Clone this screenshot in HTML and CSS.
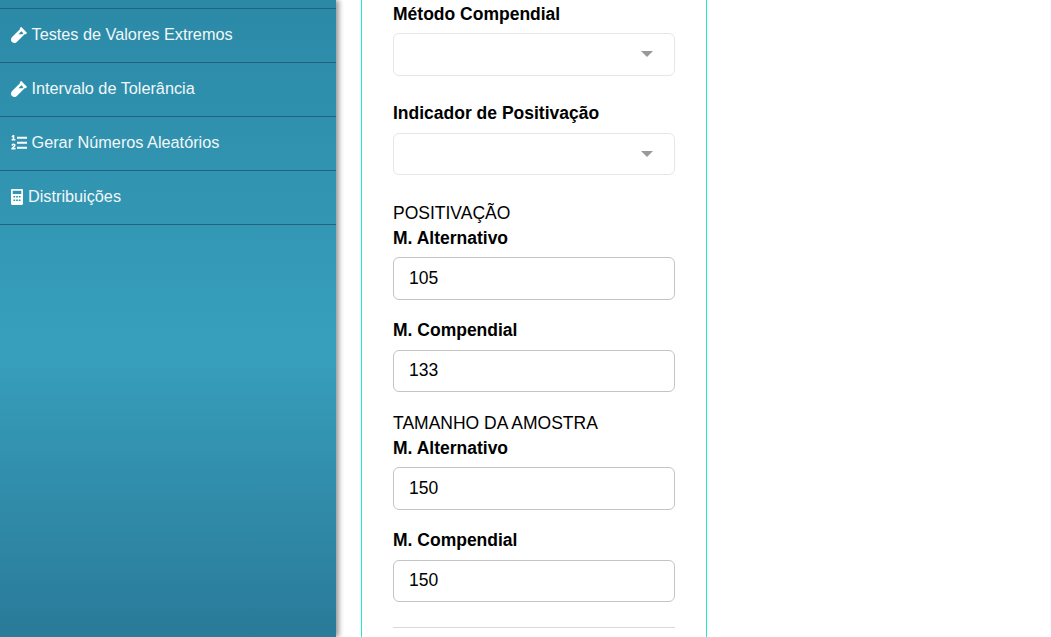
FILE: index.html
```html
<!DOCTYPE html>
<html lang="en">
<head>
    <meta charset="UTF-8">
    <title>Testes</title>
    <link rel="stylesheet" href="styles.css">
</head>
<body>
    <div class="sidebar">
        <ul class="menu">
            <li>
                <svg class="icon" viewBox="0 16 480 480"><path fill-rule="evenodd" d="M477.7 186.1L309.5 18.3c-3.1-3.1-8.2-3.1-11.3 0l-34 33.9c-3.1 3.1-3.1 8.2 0 11.3l11.2 11.1L33 316.5c-38.8 38.7-45.1 103-9.4 144.6 20.6 24 49.4 36 78.1 36 26.4 0 52.8-10 72.9-30.1l242.9-242.3 11.2 11.2c3.1 3.1 8.2 3.1 11.3 0l34-34c3.2-3.1 3.2-8.2 0-11.3zM300 232H225L309 140l62 62-30 30z"/></svg>
                <span>Testes de Valores Extremos</span>
            </li>
            <li>
                <svg class="icon" viewBox="0 16 480 480"><path fill-rule="evenodd" d="M477.7 186.1L309.5 18.3c-3.1-3.1-8.2-3.1-11.3 0l-34 33.9c-3.1 3.1-3.1 8.2 0 11.3l11.2 11.1L33 316.5c-38.8 38.7-45.1 103-9.4 144.6 20.6 24 49.4 36 78.1 36 26.4 0 52.8-10 72.9-30.1l242.9-242.3 11.2 11.2c3.1 3.1 8.2 3.1 11.3 0l34-34c3.2-3.1 3.2-8.2 0-11.3zM300 232H225L309 140l62 62-30 30z"/></svg>
                <span>Intervalo de Tolerância</span>
            </li>
            <li>
                <svg class="icon" viewBox="0 0 16 16"><path d="M0.5 1.2 2 0H3.3V4H4.4V5.6H0.6V4H1.7V2L1.1 2.4ZM0.3 10.2C0.7 9 1.6 8.5 2.6 8.5 3.7 8.5 4.6 9.2 4.6 10.3 4.6 11.3 3.7 12 2.7 12.8H4.6V14.6H0.4V13.1C1.6 12.1 2.9 11.1 2.9 10.6 2.9 10.3 2.7 10.1 2.4 10.1 2.1 10.1 1.9 10.4 1.7 10.9ZM6 1.7H16V3.7H6ZM6 6.7H16V8.7H6ZM6 11.7H16V13.7H6Z"/></svg>
                <span>Gerar Números Aleatórios</span>
            </li>
            <li>
                <svg class="icon calc" viewBox="0 0 12 16"><path fill-rule="evenodd" d="M1.2 0H10.8C11.5 0 12 .5 12 1.2V14.8C12 15.5 11.5 16 10.8 16H1.2C.5 16 0 15.5 0 14.8V1.2C0 .5 .5 0 1.2 0ZM1.7 1.7V5H10.3V1.7ZM2.4 7V8.6H4.2V7ZM5.1 7V8.6H6.9V7ZM7.8 7V8.6H9.6V7ZM2.4 10.4V12H4.2V10.4ZM5.1 10.4V12H6.9V10.4ZM7.8 10.4V12H9.6V10.4Z"/></svg>
                <span>Distribuições</span>
            </li>
        </ul>
    </div>

    <div class="main">
        <div class="card">
            <label class="field-label first">Método Compendial</label>
            <div class="select"><span class="arrow"></span></div>

            <label class="field-label gap-select">Indicador de Positivação</label>
            <div class="select short"><span class="arrow"></span></div>

            <div class="section">POSITIVAÇÃO</div>
            <label class="field-label">M. Alternativo</label>
            <input class="text-input" type="text" value="105">

            <label class="field-label gap-input">M. Compendial</label>
            <input class="text-input short" type="text" value="133">

            <div class="section next">TAMANHO DA AMOSTRA</div>
            <label class="field-label">M. Alternativo</label>
            <input class="text-input" type="text" value="150">

            <label class="field-label gap-input">M. Compendial</label>
            <input class="text-input short" type="text" value="150">

            <hr class="divider">
        </div>
    </div>
</body>
</html>
```

FILE: styles.css
```css
html, body {
    height: 100%;
}

body {
    margin: 0;
    display: flex;
    height: 637px;
    overflow: hidden;
    background: #fff;
    font-family: "Liberation Sans", Arial, sans-serif;
    color: #000;
}

.sidebar {
    width: 336px;
    flex-shrink: 0;
    padding-top: 8px;
    box-sizing: border-box;
    background: linear-gradient(to bottom, #2b89a6 0%, #379fbc 55%, #2a7a99 100%);
    box-shadow: 3px 0 5px rgba(0, 0, 0, 0.4);
}

.menu {
    list-style: none;
    margin: 0;
    padding: 0;
    border-top: 1px solid #22617f;
}

.menu li {
    box-sizing: border-box;
    height: 54px;
    display: flex;
    align-items: center;
    gap: 4.5px;
    padding-left: 11px;
    padding-bottom: 2px;
    border-bottom: 1px solid #22617f;
    color: #f2f7f9;
    font-size: 16.25px;
}

.icon {
    width: 16px;
    height: 16px;
    fill: #fff;
}

.icon.calc {
    width: 12px;
    height: 16px;
    margin-right: 0.5px;
}

.main {
    flex: 1;
    padding-left: 25px;
}

.card {
    width: 346px;
    height: 637px;
    box-sizing: border-box;
    padding: 0 31px;
    background: #fff;
    border-left: 1px solid #1fe8d0;
    border-right: 1px solid #1fe8d0;
}

.field-label {
    display: block;
    font-size: 17.5px;
    font-weight: bold;
    line-height: 20px;
    margin-bottom: 9px;
}

.field-label.first {
    padding-top: 4px;
}

.gap-select {
    margin-top: 27px;
    margin-bottom: 10px;
}

.gap-input {
    margin-top: 20px;
    margin-bottom: 10px;
}

.select {
    position: relative;
    height: 43px;
    box-sizing: border-box;
    border: 1px solid #e6e6e6;
    border-radius: 6px;
}

.select.short {
    height: 42px;
}

.arrow {
    position: absolute;
    right: 21px;
    top: 17px;
    width: 0;
    height: 0;
    border-left: 6px solid transparent;
    border-right: 6px solid transparent;
    border-top: 6px solid #999;
}

.section {
    font-size: 17.5px;
    line-height: 20px;
    margin-top: 28px;
    margin-bottom: 5px;
}

.section.next {
    margin-top: 21px;
}

.text-input {
    display: block;
    width: 100%;
    height: 43px;
    box-sizing: border-box;
    padding: 0 15px;
    border: 1px solid #c4c4c4;
    border-radius: 6px;
    font-family: inherit;
    font-size: 17.5px;
    color: #000;
    background: #fff;
    outline: none;
}

.text-input.short {
    height: 42px;
    padding-bottom: 1px;
}

.divider {
    border: none;
    border-top: 1px solid #d9d9d9;
    margin: 25px 0 0;
}
```
